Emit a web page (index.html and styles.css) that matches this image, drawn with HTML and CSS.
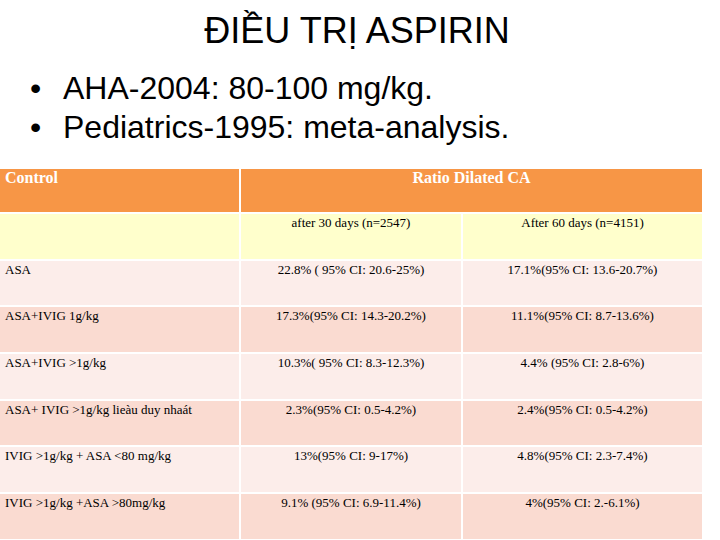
FILE: index.html
```html
<!DOCTYPE html>
<html>
<head>
<meta charset="utf-8">
<link rel="stylesheet" href="styles.css">
</head>
<body>
<h1 class="title">ĐIỀU TRỊ ASPIRIN</h1>
<ul class="points">
  <li>AHA-2004: 80-100 mg/kg.</li>
  <li>Pediatrics-1995: meta-analysis.</li>
</ul>
<div class="grid">
  <div class="cell head left">Control</div>
  <div class="cell head center span2">Ratio Dilated CA</div>

  <div class="cell yellow"></div>
  <div class="cell yellow center">after 30 days (n=2547)</div>
  <div class="cell yellow center">After 60 days (n=4151)</div>

  <div class="cell light">ASA</div>
  <div class="cell light center">22.8% ( 95% CI: 20.6-25%)</div>
  <div class="cell light center">17.1%(95% CI: 13.6-20.7%)</div>

  <div class="cell dark">ASA+IVIG 1g/kg</div>
  <div class="cell dark center">17.3%(95% CI: 14.3-20.2%)</div>
  <div class="cell dark center">11.1%(95% CI: 8.7-13.6%)</div>

  <div class="cell light">ASA+IVIG &gt;1g/kg</div>
  <div class="cell light center">10.3%( 95% CI: 8.3-12.3%)</div>
  <div class="cell light center">4.4% (95% CI: 2.8-6%)</div>

  <div class="cell dark">ASA+ IVIG &gt;1g/kg lieàu duy nhaát</div>
  <div class="cell dark center">2.3%(95% CI: 0.5-4.2%)</div>
  <div class="cell dark center">2.4%(95% CI: 0.5-4.2%)</div>

  <div class="cell light">IVIG &gt;1g/kg + ASA &lt;80 mg/kg</div>
  <div class="cell light center">13%(95% CI: 9-17%)</div>
  <div class="cell light center">4.8%(95% CI: 2.3-7.4%)</div>

  <div class="cell dark">IVIG &gt;1g/kg +ASA &gt;80mg/kg</div>
  <div class="cell dark center">9.1% (95% CI: 6.9-11.4%)</div>
  <div class="cell dark center">4%(95% CI: 2.-6.1%)</div>
</div>
</body>
</html>
```
FILE: styles.css
```css
html, body {
  margin: 0;
  padding: 0;
  background: #ffffff;
  width: 720px;
  height: 540px;
  overflow: hidden;
}
.title {
  margin: 10px 0 0 0;
  font-family: "Liberation Sans", Arial, sans-serif;
  font-weight: normal;
  font-size: 36px;
  line-height: 41px;
  text-align: center;
  color: #000;
  padding-right: 6px;
}
.points {
  list-style: none;
  margin: 18px 0 0 0;
  padding: 0 0 0 63px;
  font-family: "Liberation Sans", Arial, sans-serif;
  font-size: 32px;
  line-height: 39px;
  color: #000;
}
.points li {
  position: relative;
}
.points li::before {
  content: "•";
  position: absolute;
  left: -33px;
  top: 0;
}
.grid {
  margin-top: 22px;
  width: 702px;
  display: grid;
  grid-template-columns: 239px 220px 239px;
  grid-template-rows: 43px repeat(7, 44.7px);
  gap: 2px;
  background: #ffffff;
  font-family: "Liberation Serif", "Times New Roman", serif;
  font-size: 13px;
  line-height: 16px;
  color: #000;
}
.cell {
  padding: 1px 5px 0 5px;
  white-space: nowrap;
}
.center {
  text-align: center;
}
.span2 {
  grid-column: span 2;
}
.head {
  background: #f79646;
  color: #ffffff;
  font-weight: bold;
  font-size: 16px;
  line-height: 18px;
  padding-top: 0;
}
.yellow {
  background: #ffffcc;
}
.light {
  background: #fcedea;
}
.dark {
  background: #fadbd1;
}
```
